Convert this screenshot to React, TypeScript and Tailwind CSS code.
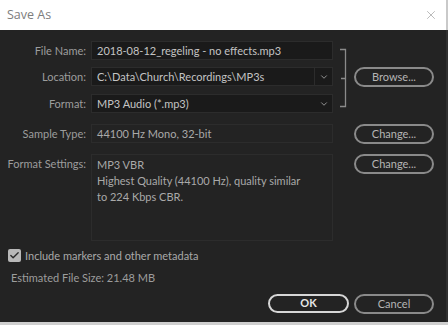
import { Check, ChevronDown, X } from "lucide-react"

const labelCls = "text-right pr-[5px] text-[11px] text-[#9d9d9d] leading-[19px]"
const fieldCls = "h-[19px] border border-[#2c2c2c] bg-[#1a1a1a] px-[5px] text-[11px] leading-[17px] text-[#c4c4c4]"
const pillCls = "flex h-[20px] w-[80px] items-center justify-center rounded-full border-2 border-[#8a8a8a] text-[11px] text-[#b5b5b5]"

export default function App() {
  return (
    <div className="flex h-[325px] w-[448px] flex-col overflow-hidden bg-[#232323] font-['Lato',sans-serif]">
      <div className="flex h-[30px] items-center justify-between border-r-2 border-[#c9c9c9] bg-white pl-[7px] pr-[8px] font-['Open_Sans',sans-serif]">
        <span className="text-[12.5px] text-[#7d7d7d]">Save As</span>
        <X className="h-[14px] w-[14px] text-[#8a8a8a]" strokeWidth={1} />
      </div>

      <div className="flex-1 border-r-2 border-[#303030]">
        <div className="grid grid-cols-[91px_242px_21px_80px] gap-y-[7px] pt-[11px]">
          <div className={labelCls}>File Name:</div>
          <div className={fieldCls}>2018-08-12_regeling - no effects.mp3</div>
          <div className="row-span-3">
            <svg width="21" height="71" viewBox="0 0 21 71" className="text-[#8a8a8a]">
              <path d="M7 8.5H12.5V65.5H7M8 37.5H12.5" fill="none" stroke="currentColor" strokeWidth="1.3" />
            </svg>
          </div>
          <div />

          <div className={labelCls}>Location:</div>
          <div className="flex h-[19px] border border-[#2c2c2c] bg-[#1a1a1a]">
            <div className="flex-1 border-r border-[#2c2c2c] px-[5px] text-[11px] leading-[17px] text-[#c4c4c4]">
              C:\Data\Church\Recordings\MP3s
            </div>
            <div className="flex w-[17px] items-center justify-center">
              <ChevronDown className="h-[10px] w-[10px] text-[#a8a8a8]" strokeWidth={2} />
            </div>
          </div>
          <div className={pillCls}>Browse...</div>

          <div className={labelCls}>Format:</div>
          <div className="flex h-[19px] items-center border border-[#2c2c2c] bg-[#1a1a1a] pl-[5px]">
            <span className="flex-1 text-[11px] leading-[17px] text-[#c4c4c4]">MP3 Audio (*.mp3)</span>
            <ChevronDown className="mr-[3px] h-[10px] w-[10px] text-[#a8a8a8]" strokeWidth={2} />
          </div>
          <div />

          <div className={`${labelCls} mt-[4px]`}>Sample Type:</div>
          <div className="mt-[4px] h-[19px] border border-[#2c2c2c] px-[5px] text-[11px] leading-[17px] text-[#a9a9a9]">
            44100 Hz Mono, 32-bit
          </div>
          <div />
          <div className={`${pillCls} mt-[4px]`}>Change...</div>

          <div className={`${labelCls} mt-[3px]`}>Format Settings:</div>
          <div className="mt-[3px] h-[87px] border border-[#2c2c2c] px-[5px] pt-[2px] text-[11px] leading-[16px] text-[#a9a9a9]">
            MP3 VBR
            <br />
            Highest Quality (44100 Hz), quality similar
            <br />
            to 224 Kbps CBR.
          </div>
          <div />
          <div className={`${pillCls} mt-[3px]`}>Change...</div>
        </div>

        <div className="mt-[8px] flex h-[13px] items-center gap-[4px] pl-[8px]">
          <div className="flex h-[13px] w-[13px] items-center justify-center rounded-[2px] bg-[#b8b8b8]">
            <Check className="h-[11px] w-[11px] text-[#2a2a2a]" strokeWidth={3} />
          </div>
          <span className="text-[11px] leading-[13px] text-[#a9a9a9]">Include markers and other metadata</span>
        </div>
        <div className="mt-[8px] pl-[11px] text-[11px] leading-[16px] text-[#9d9d9d]">Estimated File Size: 21.48 MB</div>

        <div className="mt-[8px] flex justify-end gap-[5px] pr-[12px]">
          <div className="flex h-[19px] w-[81px] items-center justify-center rounded-full border-2 border-[#d6d6d6] text-[11px] font-bold text-[#e6e6e6]">
            OK
          </div>
          <div className={`${pillCls} h-[19px] border-[#5e5e5e] text-[#7d7d7d]`}>Cancel</div>
        </div>
      </div>
      <div className="h-[3px] bg-[#cfcfcf]" />
    </div>
  )
}
